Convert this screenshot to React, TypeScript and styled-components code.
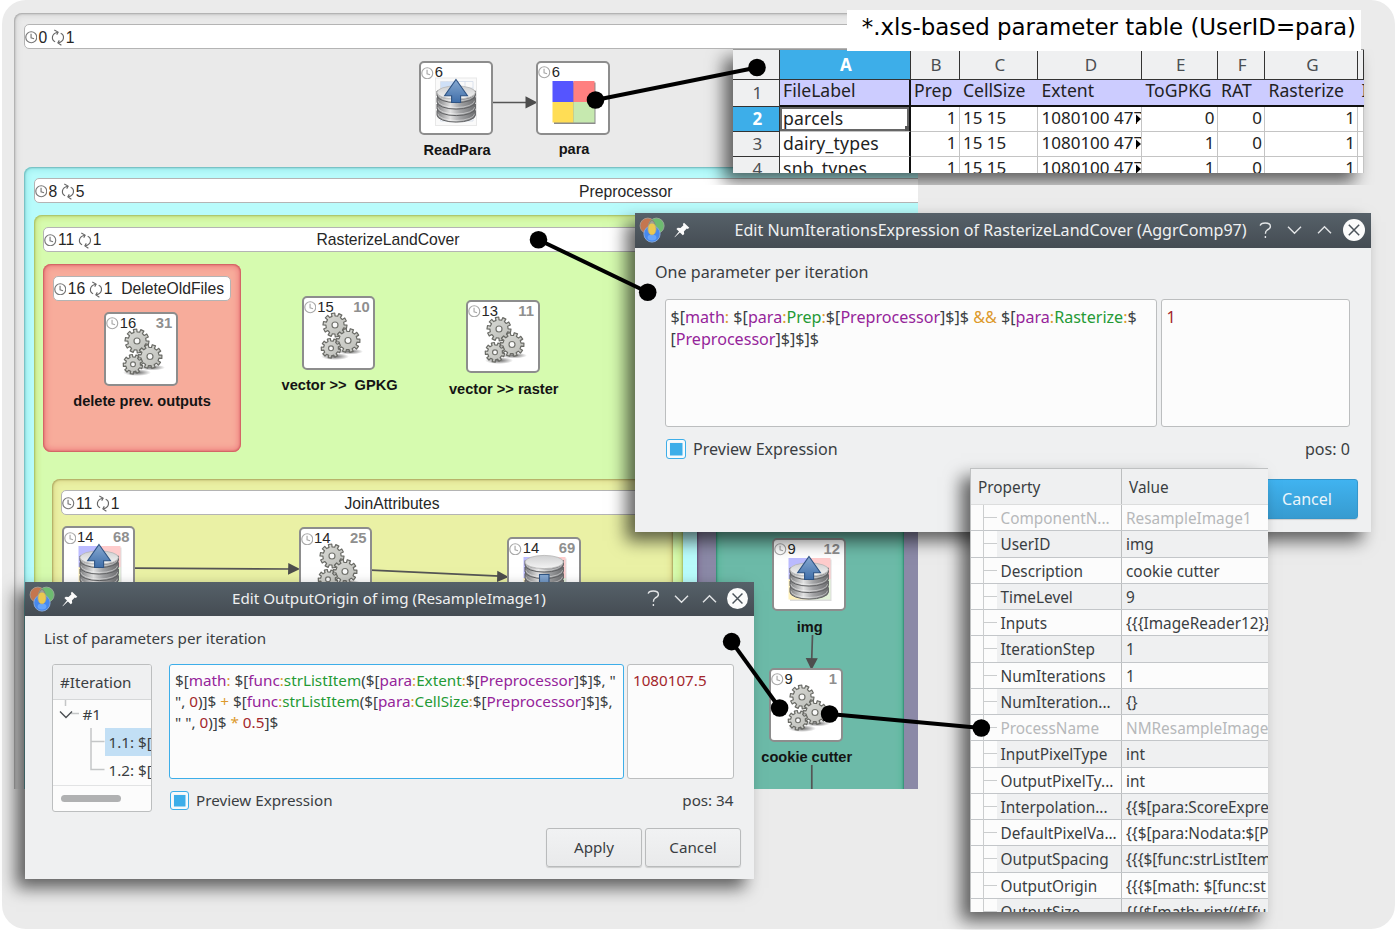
import React from "react";
import styled, { createGlobalStyle, css } from "styled-components";

const UI = `"Noto Sans", "Open Sans", sans-serif`;
const CANVAS = `"Liberation Sans", Arial, sans-serif`;
const INK = "#3a3e42";
const LINE = "#bcbebf";
const BLUE = "#3daee9";

const GlobalStyle = createGlobalStyle`
  * { box-sizing: border-box; }
  html, body { margin: 0; padding: 0; background: #fff; overflow: hidden; }
`;

const Page = styled.div`
  position: relative;
  width: 1396px;
  height: 930px;
  overflow: hidden;
  background: #fff;
  font-family: ${UI};
  color: ${INK};
`;

const Backdrop = styled.div`
  width: 1393.5px;
  height: 929px;
  margin-left: 1.5px;
  border-radius: 24px;
  background: #ebebeb;
`;

/* ---------- model canvas ---------- */

const Canvas = styled.div`
  position: absolute;
  left: 0;
  top: 0;
  width: 918px;
  height: 789px;
  overflow: hidden;
  font-family: ${CANVAS};
  color: #262626;
`;

const Group = styled.div<{
  $x: number; $y: number; $w: number; $h: number; $fill: string; $band: string; $edge: string;
}>`
  position: absolute;
  left: ${(p) => p.$x}px;
  top: ${(p) => p.$y}px;
  width: ${(p) => p.$w}px;
  height: ${(p) => p.$h}px;
  padding: 11.5px 9.5px;
  border-radius: 8px;
  background: ${(p) => p.$fill};
  box-shadow: inset 0 0 2px 1px ${(p) => p.$edge}, inset 0 0 5px 4px ${(p) => p.$band};
`;

const GroupBar = styled.div`
  display: flex;
  align-items: center;
  height: 25px;
  border: 1px solid #b4b4b4;
  border-bottom-width: 1.5px;
  border-radius: 5px;
  background: #fff;
  font-size: 15.7px;
  line-height: 20px;
  padding-top: 2px;
  white-space: nowrap;
  svg { flex: none; }
`;

const TimeText = styled.span`
  margin-left: 1.5px;
`;

const LoopGap = styled.span`
  display: flex;
  margin: 0 0.5px 0 4px;
`;

const GroupTitle = styled.span`
  flex: 1;
  padding-left: 2.5px;
  text-align: center;
`;

const Node = styled.div<{ $x: number; $y: number }>`
  position: absolute;
  left: ${(p) => p.$x}px;
  top: ${(p) => p.$y}px;
  width: 73.5px;
  height: 73.5px;
  border: 2px solid #8d8d8d;
  border-radius: 5px;
  background: #fff;
`;

const NodeHead = styled.div`
  display: flex;
  align-items: center;
  gap: 1px;
  height: 17px;
  margin-top: 1px;
  padding: 0 3.5px 0 0;
  font-size: 14.8px;
  line-height: 17px;
`;

const NodeId = styled.span`
  margin-left: auto;
  font-weight: 700;
  color: #8f8f8f;
`;

const NodeArt = styled.svg`
  position: absolute;
  left: -2px;
  top: -2px;
`;

const NodeLabel = styled.div<{ $dy: number; $dx: number }>`
  position: absolute;
  top: ${(p) => p.$dy}px;
  left: calc(50% + ${(p) => p.$dx}px);
  transform: translateX(-50%);
  font-size: 14.6px;
  line-height: 18px;
  font-weight: 700;
  color: #141414;
  white-space: pre;
`;

const Overlay = styled.svg`
  position: absolute;
  left: 0;
  top: 0;
  pointer-events: none;
`;

const Clock = ({ size = 12.5, color = "#777" }: { size?: number; color?: string }) => (
  <svg width={size} height={size} viewBox="0 0 13 13" fill="none" stroke={color}>
    <circle cx="6.5" cy="6.5" r="5.7" strokeWidth="1.2" />
    <path d="M6.3 2.8V7L9.4 8" strokeWidth="1.2" />
  </svg>
);

const Loop = () => (
  <svg width="14" height="17" viewBox="0.5 0 14 17" fill="none" stroke="#666" strokeWidth="1.15">
    <path d="M4.6 12.8C2.6 11.8 1.6 9.8 2 7.7C2.4 5.5 4.4 3.8 7.2 3.2" />
    <path d="M10.2 4.2C12.3 5.2 13.3 7.2 12.9 9.3C12.5 11.5 10.6 13.1 7.8 13.8" />
    <path d="M3.8 1L7.6 3.1L6.2 5.6" />
    <path d="M10.9 16.2L7.4 13.9L8.8 11.4" />
  </svg>
);

function gearPath(cx: number, cy: number, r: number, teeth: number, turn: number) {
  const pts: string[] = [];
  const step = (Math.PI * 2) / teeth;
  for (let i = 0; i < teeth; i++) {
    const a = turn + i * step;
    const corners: [number, number][] = [
      [-0.27, r * 0.76], [-0.23, r], [0.23, r], [0.27, r * 0.76],
    ];
    corners.forEach(([o, rad]) => {
      pts.push(`${(cx + Math.cos(a + o * step) * rad).toFixed(2)} ${(cy + Math.sin(a + o * step) * rad).toFixed(2)}`);
    });
  }
  return `M${pts.join("L")}Z`;
}

const Gear = ({ cx, cy, r, n, turn }: { cx: number; cy: number; r: number; n: number; turn: number }) => (
  <g>
    <path d={gearPath(cx, cy, r, n, turn)} fill="url(#steel)" stroke="#6a6b66" strokeWidth="1.2" strokeLinejoin="round" />
    <circle cx={cx} cy={cy} r={r * 0.25} fill="#fafafa" stroke="#73746f" strokeWidth="1.2" />
  </g>
);

const GearsArt = () => (
  <>
    <ellipse cx="33" cy="60.5" rx="14" ry="3.5" fill="url(#ground)" />
    <ellipse cx="48" cy="55.5" rx="13" ry="3" fill="url(#ground)" />
    <Gear cx={33} cy={29} r={12} n={10} turn={0.15} />
    <Gear cx={46} cy={44.5} r={12} n={10} turn={0.02} />
    <Gear cx={29} cy={52.3} r={9.8} n={9} turn={0.3} />
  </>
);

const QuadArt = ({ pale }: { pale?: boolean }) => {
  const c = pale ? ["#bbbbff", "#ffcccc", "#fff1bb", "#e2f2d8"] : ["#5555ff", "#ff8080", "#ffdd55", "#c6e9af"];
  return (
    <>
      <rect x="18" y="21.5" width="41.5" height="41.5" fill={pale ? "#ddd" : "#8b8b8b"} />
      <rect x="16.5" y="20" width="21" height="21" fill={c[0]} />
      <rect x="37.5" y="20" width="21" height="21" fill={c[1]} />
      <rect x="16.5" y="41" width="21" height="20.5" fill={c[2]} />
      <rect x="37.5" y="41" width="21" height="20.5" fill={c[3]} />
    </>
  );
};

const PageArt = () => (
  <>
    <rect x="16.5" y="17" width="41" height="47.5" fill="#fafafa" stroke="#e8e8e8" />
    <path d="M21.5 20.5H54V60H21.5ZM21.5 27H54M21.5 34H54M28 20.5V60M36 20.5V60M46 20.5V60" fill="none" stroke="#d3dcea" strokeWidth=".8" />
    <rect x="22" y="21" width="13" height="6" fill="#cfe0f7" />
  </>
);

const Disks = ({ top }: { top: number }) => (
  <>
    {[24, 17.5, 11, 4.5].map((o) => (
      <g key={o}>
        <path
          d={`M18 ${top + o}v4.6a19.2 7 0 0 0 38.4 0v-4.6z`}
          fill="url(#disk)"
          stroke="#606163"
          strokeWidth="1"
        />
        <path d={`M18.8 ${top + o + 3.2}a18.4 6.8 0 0 0 36.8 0`} fill="none" stroke="#fff" strokeOpacity=".5" strokeWidth=".9" />
      </g>
    ))}
    <ellipse cx="37.2" cy={top + 6} rx="19.2" ry="6.6" fill="url(#lid)" stroke="#b4b4b4" strokeWidth=".8" />
  </>
);

const UploadArt = () => (
  <>
    <Disks top={25.5} />
    <path d="M37 18.5L48.5 34.8H41.6V41.5H32.6V34.8H25.6Z" fill="url(#arrow)" stroke="#2f5484" strokeWidth="1.1" />
  </>
);

const DownloadArt = () => (
  <>
    <Disks top={19} />
    <path d="M32.5 37.5H42V46H48L37 62L26 46H32.5Z" fill="url(#arrow)" stroke="#2f5484" strokeWidth="1.1" />
  </>
);

const SharedPaints = () => (
  <defs>
    <linearGradient id="steel" x1="0" y1="0" x2="1" y2="1">
      <stop offset="0" stopColor="#dadbd7" />
      <stop offset="1" stopColor="#bbbcb7" />
    </linearGradient>
    <radialGradient id="ground">
      <stop offset="0" stopColor="#000" stopOpacity=".6" />
      <stop offset="1" stopColor="#000" stopOpacity="0" />
    </radialGradient>
    <linearGradient id="disk">
      <stop offset="0" stopColor="#7c7d7f" />
      <stop offset=".35" stopColor="#e2e2e2" />
      <stop offset=".6" stopColor="#a3a4a6" />
      <stop offset="1" stopColor="#6c6d6f" />
    </linearGradient>
    <linearGradient id="lid" x1="0" y1="0" x2="0" y2="1">
      <stop offset="0" stopColor="#cfd0d1" />
      <stop offset="1" stopColor="#f4f4f4" />
    </linearGradient>
    <linearGradient id="arrow" x1="0" y1="0" x2="0" y2="1">
      <stop offset="0" stopColor="#88aad2" />
      <stop offset="1" stopColor="#3f6ea9" />
    </linearGradient>
  </defs>
);

type Art = "gears" | "quad" | "page" | "upload" | "download";

const nodes: { x: number; y: number; t: string; id?: string; art: Art; label?: string; dy?: number; dx?: number }[] = [
  { x: 419.3, y: 61.3, t: "6", art: "page", label: "ReadPara", dy: 78, dx: 1 },
  { x: 536.3, y: 61, t: "6", art: "quad", label: "para", dy: 77, dx: 1 },
  { x: 104.3, y: 312, t: "16", id: "31", art: "gears", label: "delete prev. outputs", dy: 78, dx: 1 },
  { x: 301.8, y: 296, t: "15", id: "10", art: "gears", label: "vector >>  GPKG", dy: 77.5, dx: 1 },
  { x: 466, y: 299.5, t: "13", id: "11", art: "gears", label: "vector >> raster", dy: 78, dx: 1 },
  { x: 61.5, y: 526.3, t: "14", id: "68", art: "upload" },
  { x: 298.5, y: 527.3, t: "14", id: "25", art: "gears" },
  { x: 507.3, y: 537.3, t: "14", id: "69", art: "download" },
  { x: 772, y: 537.8, t: "9", id: "12", art: "upload", label: "img", dy: 78, dx: 1 },
  { x: 769, y: 668, t: "9", id: "1", art: "gears", label: "cookie cutter", dy: 78, dx: 1 },
];

const bar = (time: string, loops: string, title?: string) => (
  <GroupBar>
    <Clock />
    <TimeText>{time}</TimeText>
    <LoopGap><Loop /></LoopGap>
    <span>{loops}</span>
    {title && <GroupTitle>{title}</GroupTitle>}
  </GroupBar>
);

const ModelCanvas = () => (
  <Canvas>
    <Group $x={14} $y={12.5} $w={1240} $h={900} $fill="#eaeaea" $band="#dcdcdc" $edge="#a4a4a4">{bar("0", "1")}</Group>
    <Group $x={24} $y={166.5} $w={1151} $h={700} $fill="#b8fbfb" $band="#a2eff0" $edge="#6cb4b6">{bar("8", "5", "Preprocessor")}</Group>
    <Group $x={33.5} $y={215} $w={649} $h={620} $fill="#d6fbaf" $band="#cdec90" $edge="#a5bb62">{bar("11", "1", "RasterizeLandCover")}</Group>
    <Group $x={43.3} $y={264} $w={197.5} $h={187.5} $fill="#f7ac9b" $band="#f28d88" $edge="#c9595b">{bar("16", "1", "DeleteOldFiles")}</Group>
    <Group $x={51.5} $y={478.5} $w={621} $h={400} $fill="#eaf1a5" $band="#e2e294" $edge="#a8a25c">{bar("11", "1", "JoinAttributes")}</Group>
    <Group $x={696.5} $y={216} $w={300} $h={640} $fill="#8b89a7" $band="#857a9c" $edge="#5f4f73" />
    <Group $x={715.5} $y={260} $w={188} $h={600} $fill="#6cbaa8" $band="#5cb89c" $edge="#2f8c71" />
    <Overlay width="918" height="789" viewBox="0 0 918 789">
      <SharedPaints />
      <g stroke="#555" strokeWidth="1.7" fill="none">
        <path d="M493 102.5H527M135 568.2L290 569M371 570.2L500 576.2M812.5 635L811.7 660M811.8 765V789" />
      </g>
      <g fill="#4d4d4d">
        <path d="M525.5 96.3L537.5 102.5L525.5 108.5Z" />
        <path d="M288.3 563L300 569L288 574.8Z" />
        <path d="M497.3 570.8L508.8 577L497 582Z" />
        <path d="M805.7 658L817.8 658.3L811.5 670Z" />
      </g>
    </Overlay>
    {nodes.map((n, i) => (
      <Node key={i} $x={n.x} $y={n.y}>
        <NodeHead>
          <Clock size={12.5} color="#a8a8a8" />
          <span>{n.t}</span>
          {n.id && <NodeId>{n.id}</NodeId>}
        </NodeHead>
        <NodeArt width="73" height="73" viewBox="0 0 73 73">
          {n.art === "gears" && <GearsArt />}
          {n.art === "quad" && <QuadArt />}
          {n.art === "page" && <><PageArt /><UploadArt /></>}
          {n.art === "upload" && <><QuadArt pale /><UploadArt /></>}
          {n.art === "download" && <><QuadArt pale /><DownloadArt /></>}
        </NodeArt>
        {n.label && <NodeLabel $dy={n.dy!} $dx={n.dx!}>{n.label}</NodeLabel>}
      </Node>
    ))}
  </Canvas>
);

/* ---------- spreadsheet ---------- */

const dropShadow = css`box-shadow: -9px 9px 16px rgba(0, 0, 0, 0.6);`;

const Caption = styled.div`
  position: absolute;
  left: 846.5px;
  top: 9.5px;
  width: 514px;
  height: 41px;
  padding-right: 4.5px;
  background: #fff;
  color: #000;
  font-family: "DejaVu Sans", sans-serif;
  font-size: 22.9px;
  line-height: 34.5px;
  text-align: right;
  white-space: nowrap;
`;

const SheetClip = styled.div`
  position: absolute;
  left: 703px;
  top: 49px;
  width: 672px;
  height: 136px;
  padding-left: 30px;
  overflow: hidden;
`;

const Sheet = styled.div`
  display: grid;
  grid-template-columns: 46.5px 131px 49px 78.5px 104px 75.5px 47.5px 93px 6px;
  grid-template-rows: 30px 26.5px 25.5px 25px 25px;
  width: 630.5px;
  height: 123.5px;
  overflow: hidden;
  background: #fff;
  font-size: 17px;
  line-height: 24px;
  color: #222;
  border-top: 1px solid #999;
  ${dropShadow}
`;

const ColHead = styled.div<{ $on?: boolean }>`
  display: flex;
  align-items: center;
  justify-content: center;
  padding-left: 3px;
  border-right: 1.5px solid #333;
  border-bottom: 1.5px solid #333;
  background: ${(p) => (p.$on ? BLUE : "#eff0f1")};
  color: ${(p) => (p.$on ? "#fff" : "#4a4e52")};
  font-weight: ${(p) => (p.$on ? 700 : 400)};
`;

const RowHead = styled(ColHead)`
  line-height: 22px;
  padding-top: 0.5px;
`;

const Cell = styled.div<{ $band?: boolean; $right?: boolean; $freeze?: boolean; $sel?: boolean; $name?: boolean }>`
  position: relative;
  display: flex;
  align-items: flex-start;
  justify-content: ${(p) => (p.$right ? "flex-end" : "flex-start")};
  min-width: 0;
  padding: 0 ${(p) => (p.$right ? 2 : 0)}px 0 ${(p) => (p.$right ? 0 : 3.5)}px;
  line-height: ${(p) => (p.$band ? 21.5 : 22)}px;
  overflow: hidden;
  white-space: nowrap;
  font-size: ${(p) => (p.$band || p.$name ? 17.6 : 17)}px;
  letter-spacing: ${(p) => (p.$name ? 0.2 : 0)}px;
  background: ${(p) => (p.$band ? "#ccccff" : "#fff")};
  border-right: ${(p) => (p.$freeze ? "2px solid #111" : p.$band ? "0" : "1.5px solid #c4c4c4")};
  border-bottom: ${(p) => (p.$band ? "2px solid #111" : "1.5px solid #c4c4c4")};
  ${(p) => p.$sel && css`box-shadow: inset 0 0 0 2px #666;`}
`;

const More = styled.svg`
  position: absolute;
  right: 0;
  top: 7px;
`;

const Handle = styled.i`
  position: absolute;
  right: 0;
  bottom: 0;
  width: 4px;
  height: 5px;
  background: #555;
`;

const sheetRows = [
  ["2", "parcels", "0"],
  ["3", "dairy_types", "1"],
  ["4", "snb_types", "1"],
];

const Spreadsheet = () => (
  <>
    <SheetClip>
      <Sheet>
        <ColHead />
        {["A", "B", "C", "D", "E", "F", "G", ""].map((c, i) => (
          <ColHead key={i} $on={c === "A"}>{c}</ColHead>
        ))}
        <RowHead>1</RowHead>
        {["FileLabel", "Prep", "CellSize", "Extent", "ToGPKG", "RAT", "Rasterize", "I"].map((c) => (
          <Cell key={c} $band $freeze={c === "FileLabel"}>{c}</Cell>
        ))}
        {sheetRows.map(([n, name, gpkg]) => (
          <React.Fragment key={n}>
            <RowHead $on={n === "2"}>{n}</RowHead>
            <Cell $name $freeze $sel={n === "2"}>{name}{n === "2" && <Handle />}</Cell>
            <Cell $right>1</Cell>
            <Cell>15 15</Cell>
            <Cell>
              1080100 477
              <More width="6" height="10" viewBox="0 0 6 10">
                <path d="M2 0H6V10H2Z" fill="#fff" />
                <path d="M1 .5L6 5L1 9.5Z" fill="#000" />
              </More>
            </Cell>
            <Cell $right>{gpkg}</Cell>
            <Cell $right>0</Cell>
            <Cell $right>1</Cell>
            <Cell />
          </React.Fragment>
        ))}
      </Sheet>
    </SheetClip>
    <Caption>*.xls-based parameter table (UserID=para)</Caption>
  </>
);

/* ---------- dialogs ---------- */

const Dialog = styled.div<{ $x: number; $y: number; $w: number; $h: number; $font: number }>`
  position: absolute;
  left: ${(p) => p.$x}px;
  top: ${(p) => p.$y}px;
  width: ${(p) => p.$w}px;
  height: ${(p) => p.$h}px;
  display: flex;
  flex-direction: column;
  background: #eff0f1;
  font-size: ${(p) => p.$font}px;
  white-space: nowrap;
  ${dropShadow}
`;

const TitleBar = styled.div<{ $h: number }>`
  display: flex;
  align-items: center;
  flex: none;
  height: ${(p) => p.$h}px;
  padding: 0 6px 0 4px;
  background: linear-gradient(#566169, #454c53);
  color: #eff0f1;
  svg { flex: none; }
`;

const TitleText = styled.span<{ $left: number; $drop?: number }>`
  margin-left: ${(p) => p.$left}px;
  margin-right: auto;
  padding-bottom: ${(p) => p.$drop ?? 0}px;
`;

const WinButtons = styled.div<{ $gap: number }>`
  display: flex;
  align-items: center;
  gap: ${(p) => p.$gap}px;
  > :last-child { margin-left: -3.5px; }
`;

const Hint = styled.div<{ $pad: string }>`
  padding: ${(p) => p.$pad};
  line-height: 22px;
`;

const Row = styled.div<{ $pad: string; $gap?: number; $end?: boolean }>`
  display: flex;
  align-items: ${(p) => (p.$end ? "center" : "flex-start")};
  justify-content: ${(p) => (p.$end ? "flex-end" : "flex-start")};
  gap: ${(p) => p.$gap ?? 0}px;
  padding: ${(p) => p.$pad};
`;

const Editor = styled.div<{ $w: number; $h: number; $focus?: boolean; $line: number; $padX: number; $top: number; $font: number }>`
  flex: none;
  width: ${(p) => p.$w}px;
  height: ${(p) => p.$h}px;
  padding: ${(p) => p.$top}px 0 0 ${(p) => p.$padX}px;
  border: 1.5px solid ${(p) => (p.$focus ? BLUE : LINE)};
  border-radius: 3px;
  background: #fcfcfc;
  font-size: ${(p) => p.$font}px;
  line-height: ${(p) => p.$line}px;
  white-space: pre;
`;

const Key = styled.span`color: #95249a;`;
const Op = styled.span`color: #dc9a2c;`;
const Ref = styled.span`color: #249a35;`;
const Num = styled.span`color: #a3262b;`;

const CheckLabel = styled.label<{ $gap?: number }>`
  display: flex;
  align-items: center;
  gap: ${(p) => p.$gap ?? 7}px;
  line-height: 22px;
`;

const Box = styled.i<{ $s: number }>`
  width: ${(p) => p.$s}px;
  height: ${(p) => p.$s}px;
  border: 1.5px solid ${BLUE};
  border-radius: 3px;
  background: ${BLUE} content-box;
  padding: 2.5px;
  box-shadow: inset 0 0 0 2.5px #f6fafc;
`;

const Button = styled.button<{ $w: number; $h: number; $primary?: boolean }>`
  width: ${(p) => p.$w}px;
  height: ${(p) => p.$h}px;
  padding: 0;
  border: 1.5px solid ${(p) => (p.$primary ? "#3596cb" : "#b9bbbc")};
  border-radius: 3px;
  background: ${(p) => (p.$primary ? "linear-gradient(#40b3f0, #379bd0)" : "linear-gradient(#f1f2f3, #e9eaeb)")};
  box-shadow: 0 1px 1px rgba(0, 0, 0, 0.15);
  color: ${(p) => (p.$primary ? "#eaf5fb" : INK)};
  font: inherit;
`;

const Logo = () => (
  <svg width="26" height="26" viewBox="0 0 26 26">
    <circle cx="8.8" cy="8.8" r="7.7" fill="#c4764f" stroke="#a8968b" />
    <circle cx="17.4" cy="8.8" r="7.7" fill="#6dbb70" stroke="#94a996" />
    <path d="M13 2.4C14.9 3.6 16.4 6 16.7 8.8H9.4C9.7 6 11.1 3.6 13 2.4Z" fill="#87857a" />
    <ellipse cx="13" cy="16.9" rx="8.1" ry="8.2" fill="#4789ee" stroke="#84a6d6" />
    <ellipse cx="13" cy="20.6" rx="4.4" ry="3" fill="#75b0ff" opacity=".7" />
    <ellipse cx="13" cy="12" rx="4" ry="5.9" fill="#ebc850" stroke="#bfae74" strokeWidth=".8" />
    <path d="M10.2 7.6C11.4 5.8 14.6 5.8 15.8 7.6L14.6 5.2L13 3.8L11.4 5.2Z" fill="#a3a197" />
  </svg>
);

const Pin = () => (
  <svg width="16" height="16" viewBox="0 0 16 16" fill="#fbfbfb">
    <path d="M10 .8L15.3 5.8L13.8 6.9L12.8 6.5L9.9 9.4L10.2 12L8.8 13.3L5.9 10.5L.8 15.3L.5 15L5 9.6L2.4 6.9L3.8 5.7L6.5 6L9.4 3.2L8.9 2Z" />
  </svg>
);

const HelpIcon = () => (
  <svg width="13" height="17" viewBox="0 0 13 17" fill="none" stroke="#e3e5e7" strokeWidth="1.4">
    <path d="M1.2 3.6C1.6 1.8 3.6 1 6.2 1C9.6 1 11.4 2.2 11.4 4.4C11.4 6.4 9.8 7.2 8.2 8C6.8 8.8 6.4 9.6 6.4 11.8" />
    <path d="M6.4 14V16" />
  </svg>
);

const Chevron = ({ up }: { up?: boolean }) => (
  <svg width="15" height="10" viewBox="0 0 15 10" fill="none" stroke="#e3e5e7" strokeWidth="1.4">
    <path d={up ? "M1 8.2L7.5 1.7L14 8.2" : "M1 1.8L7.5 8.3L14 1.8"} />
  </svg>
);

const CloseIcon = ({ size }: { size: number }) => (
  <svg width={size} height={size} viewBox="0 0 22 22">
    <circle cx="11" cy="11" r="11" fill="#fbfbfb" />
    <path d="M5.8 5.8L16.2 16.2M16.2 5.8L5.8 16.2" stroke="#4a5259" strokeWidth="1.5" />
  </svg>
);

const PinSlot = styled.span<{ $l: number }>`
  display: flex;
  margin-left: ${(p) => p.$l}px;
`;

const PosText = styled.span`
  margin-left: auto;
  line-height: 22px;
`;

const NumIterationsDialog = () => (
  <Dialog $x={635} $y={212.5} $w={736} $h={319.5} $font={16.08}>
    <TitleBar $h={35.5}>
      <Logo />
      <PinSlot $l={9}><Pin /></PinSlot>
      <TitleText $left={44.5}>Edit NumIterationsExpression of RasterizeLandCover (AggrComp97)</TitleText>
      <WinButtons $gap={15}>
        <HelpIcon /><Chevron /><Chevron up /><CloseIcon size={22} />
      </WinButtons>
    </TitleBar>
    <Hint $pad="12.5px 20px 0">One parameter per iteration</Hint>
    <Row $pad="16.5px 0 0 29.5px" $gap={4}>
      <Editor $w={492} $h={128} $line={22.3} $padX={5} $top={6} $font={16.1}>
        <div>$[<Key>math</Key><Op>:</Op> $[<Key>para</Key><Op>:</Op><Ref>Prep</Ref><Op>:</Op>$[<Key>Preprocessor</Key>]$]$ <Op>&amp;&amp;</Op> $[<Key>para</Key><Op>:</Op><Ref>Rasterize</Ref><Op>:</Op>$</div>
        <div>[<Key>Preprocessor</Key>]$]$]$</div>
      </Editor>
      <Editor $w={189.5} $h={128} $line={22.3} $padX={5} $top={6} $font={16.1}><Num>1</Num></Editor>
    </Row>
    <Row $pad="11px 21px 0 30.5px">
      <CheckLabel $gap={7.5}><Box $s={20} />Preview Expression</CheckLabel>
      <PosText>pos: 0</PosText>
    </Row>
    <Row $pad="18.5px 13px 0 0" $end>
      <Button $w={102} $h={40} $primary>Cancel</Button>
    </Row>
  </Dialog>
);

const Tree = styled.div`
  flex: none;
  width: 100px;
  height: 148px;
  display: flex;
  flex-direction: column;
  border: 1.5px solid ${LINE};
  border-radius: 3px;
  background: #fcfcfc;
  overflow: hidden;
`;

const TreeHead = styled.div`
  height: 35px;
  padding-left: 7px;
  border-bottom: 1.5px solid #d5d7d8;
  background: #eff0f1;
  line-height: 35px;
`;

const TreeRow = styled.div`
  display: flex;
  align-items: center;
  height: 28.2px;
  svg { flex: none; }
`;

const TreeText = styled.span<{ $on?: boolean; $pad: number }>`
  flex: 1;
  height: 100%;
  padding-left: ${(p) => p.$pad}px;
  line-height: 29px;
  background: ${(p) => (p.$on ? "#c2dff5" : "transparent")};
`;

const TreeScroll = styled.div`
  flex: 1;
  padding: 9px 0 0 8px;
  border-top: 1.5px solid #e2e3e4;
  &::before {
    content: "";
    display: block;
    width: 60px;
    height: 7px;
    border-radius: 4px;
    background: #b0b1b2;
  }
`;

const RightSide = styled.div`
  width: 564.5px;
  margin-left: 17px;
`;

const OutputOriginDialog = () => (
  <Dialog $x={25} $y={582} $w={729} $h={297} $font={15.2}>
    <TitleBar $h={33.5}>
      <Logo />
      <PinSlot $l={6.5}><Pin /></PinSlot>
      <TitleText $left={154.5} $drop={1.5}>Edit OutputOrigin of img (ResampleImage1)</TitleText>
      <WinButtons $gap={13.5}>
        <HelpIcon /><Chevron /><Chevron up /><CloseIcon size={21} />
      </WinButtons>
    </TitleBar>
    <Hint $pad="11px 19px 0">List of parameters per iteration</Hint>
    <Row $pad="15.5px 0 0 27px">
      <Tree>
        <TreeHead>#Iteration</TreeHead>
        <TreeRow>
          <svg width="29" height="28" viewBox="0 0 29 28" fill="none">
            <path d="M12.5 0V6M18 13.5H26" stroke="#c4c6c7" strokeWidth="1.5" />
            <path d="M7 11.5L13 17.5L19 11.5" stroke="#4a4e52" strokeWidth="1.4" />
          </svg>
          <TreeText $pad={0.5}>#1</TreeText>
        </TreeRow>
        <TreeRow>
          <svg width="51.5" height="28" viewBox="0 0 51.5 28" fill="none" stroke="#c4c6c7" strokeWidth="1.5">
            <path d="M38 0V28M38 13.5H51.5" />
          </svg>
          <TreeText $on $pad={4}>1.1: $[</TreeText>
        </TreeRow>
        <TreeRow>
          <svg width="51.5" height="28" viewBox="0 0 51.5 28" fill="none" stroke="#c4c6c7" strokeWidth="1.5">
            <path d="M38 0V13.5H51.5" />
          </svg>
          <TreeText $pad={4}>1.2: $[</TreeText>
        </TreeRow>
        <TreeScroll />
      </Tree>
      <RightSide>
        <Row $pad="0" $gap={3.5}>
          <Editor $w={454.5} $h={114.5} $line={21.2} $padX={5} $top={5} $font={15.25} $focus>
            <div>$[<Key>math</Key><Op>:</Op> $[<Key>func</Key><Op>:</Op><Ref>strListItem</Ref>($[<Key>para</Key><Op>:</Op><Ref>Extent</Ref><Op>:</Op>$[<Key>Preprocessor</Key>]$]$, "</div>
            <div>", <Num>0</Num>)]$ <Op>+</Op> $[<Key>func</Key><Op>:</Op><Ref>strListItem</Ref>($[<Key>para</Key><Op>:</Op><Ref>CellSize</Ref><Op>:</Op>$[<Key>Preprocessor</Key>]$]$,</div>
            <div>" ", <Num>0</Num>)]$ <Op>*</Op> <Num>0.5</Num>]$</div>
          </Editor>
          <Editor $w={106.5} $h={114.5} $line={21.2} $padX={5} $top={5} $font={15.2}><Num>1080107.5</Num></Editor>
        </Row>
        <Row $pad="10.5px 0 0 1px">
          <CheckLabel><Box $s={19} />Preview Expression</CheckLabel>
          <PosText>pos: 34</PosText>
        </Row>
      </RightSide>
    </Row>
    <Row $pad="16px 13px 0 0" $gap={3} $end>
      <Button $w={96} $h={38.5}>Apply</Button>
      <Button $w={96} $h={38.5}>Cancel</Button>
    </Row>
  </Dialog>
);

/* ---------- property table ---------- */

const Props = styled.div`
  position: absolute;
  left: 970px;
  top: 468px;
  width: 297.5px;
  height: 444px;
  overflow: hidden;
  border-top: 1.5px solid #bfc1c2;
  border-left: 1px solid #bfc1c2;
  background: #fcfcfc;
  font-size: 15.35px;
  white-space: nowrap;
  ${dropShadow}
`;

const PropsHead = styled.div`
  display: flex;
  height: 36px;
  background: #eff0f1;
  border-bottom: 1.5px solid #dcdddd;
  line-height: 36px;
`;

const PropsHeadName = styled.div`
  width: 151px;
  padding-left: 7px;
  border-right: 1.5px solid ${LINE};
`;

const PropsHeadValue = styled.div`
  padding-left: 7px;
`;

const PropRow = styled.div<{ $alt: boolean; $dim?: boolean }>`
  display: flex;
  height: 26.25px;
  line-height: 27px;
  border-bottom: 1.3px solid #c3c6c9;
  color: ${(p) => (p.$dim ? "#b6b8ba" : INK)};
  --row: ${(p) => (p.$alt ? "#eff0f1" : "#fcfcfc")};
`;

const Branch = styled.div`
  flex: none;
  width: 26px;
  padding-left: 12px;
  &::before {
    content: "";
    display: block;
    height: 27px;
    border-left: 1.5px solid #cbcdce;
    background: linear-gradient(#cbcdce, #cbcdce) 0 12px / 100% 1.3px no-repeat;
  }
`;

const PropName = styled.div`
  flex: none;
  width: 125px;
  padding-left: 3.5px;
  border-right: 1.5px solid ${LINE};
  background: var(--row);
`;

const PropValue = styled.div`
  flex: 1;
  padding-left: 4px;
  overflow: hidden;
  background: var(--row);
`;

const properties: [string, string, boolean?][] = [
  ["ComponentN...", "ResampleImage1", true],
  ["UserID", "img"],
  ["Description", "cookie cutter"],
  ["TimeLevel", "9"],
  ["Inputs", "{{{ImageReader12}}}"],
  ["IterationStep", "1"],
  ["NumIterations", "1"],
  ["NumIteration...", "{}"],
  ["ProcessName", "NMResampleImage", true],
  ["InputPixelType", "int"],
  ["OutputPixelTy...", "int"],
  ["Interpolation...", "{{$[para:ScoreExpre"],
  ["DefaultPixelVa...", "{{$[para:Nodata:$[P"],
  ["OutputSpacing", "{{{$[func:strListItem"],
  ["OutputOrigin", "{{{$[math: $[func:st"],
  ["OutputSize", "{{{$[math: rint(($[fu"],
];

const PropertyTable = () => (
  <Props>
    <PropsHead>
      <PropsHeadName>Property</PropsHeadName>
      <PropsHeadValue>Value</PropsHeadValue>
    </PropsHead>
    {properties.map(([name, value, dim], i) => (
      <PropRow key={name} $alt={i % 2 === 1} $dim={dim}>
        <Branch />
        <PropName>{name}</PropName>
        <PropValue>{value}</PropValue>
      </PropRow>
    ))}
  </Props>
);

/* ---------- callouts ---------- */

const callouts = [
  [595.5, 100, 757, 67.5],
  [538.5, 239.7, 647.7, 292.3],
  [731.6, 641.6, 779.6, 708],
  [829.6, 714, 981.3, 728],
];

export default function App() {
  return (
    <Page>
      <GlobalStyle />
      <Backdrop />
      <ModelCanvas />
      <Spreadsheet />
      <NumIterationsDialog />
      <OutputOriginDialog />
      <PropertyTable />
      <Overlay width="1396" height="930" viewBox="0 0 1396 930">
        {callouts.map(([x1, y1, x2, y2]) => (
          <g key={x1}>
            <line x1={x1} y1={y1} x2={x2} y2={y2} stroke="#000" strokeWidth="4" />
            <circle cx={x1} cy={y1} r="8.8" />
            <circle cx={x2} cy={y2} r="8.8" />
          </g>
        ))}
      </Overlay>
    </Page>
  );
}
